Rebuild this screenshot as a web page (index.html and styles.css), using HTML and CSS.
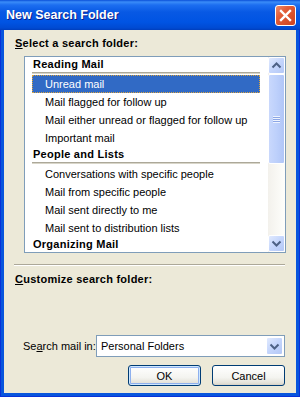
FILE: index.html
```html
<html>
	<head>
		<link rel="stylesheet" href="styles.css">
	</head>
	<body>
		<div class="window">
			<div class="titlebar">
				<span class="title">New Search Folder</span>
				<div class="close">
					<svg width="19" height="19" viewBox="0 0 19 19"><path d="M5 5 L14 14 M14 5 L5 14" stroke="#fff" stroke-width="2.4" stroke-linecap="square"/></svg>
				</div>
			</div>
			<div class="client">
				<div class="label"><u>S</u>elect a search folder:</div>

				<div class="listbox">
					<div class="items">
						<div class="group">Reading Mail</div>
						<div class="item selected">Unread mail</div>
						<div class="item">Mail flagged for follow up</div>
						<div class="item">Mail either unread or flagged for follow up</div>
						<div class="item">Important mail</div>
						<div class="group">People and Lists</div>
						<div class="item">Conversations with specific people</div>
						<div class="item">Mail from specific people</div>
						<div class="item">Mail sent directly to me</div>
						<div class="item">Mail sent to distribution lists</div>
						<div class="group">Organizing Mail</div>
					</div>
					<div class="scrollbar">
						<div class="sb-btn">
							<svg width="15" height="15" viewBox="0 0 15 15"><path d="M3.5 9.5 L7.5 5.5 L11.5 9.5" fill="none" stroke="#4d6185" stroke-width="2"/></svg>
						</div>
						<div class="sb-thumb"><span class="grip"></span></div>
						<div class="sb-track"></div>
						<div class="sb-btn">
							<svg width="15" height="15" viewBox="0 0 15 15"><path d="M3.5 5.5 L7.5 9.5 L11.5 5.5" fill="none" stroke="#4d6185" stroke-width="2"/></svg>
						</div>
					</div>
				</div>

				<div class="separator"></div>
				<div class="label"><u>C</u>ustomize search folder:</div>

				<div class="search-row">
					<span class="field-label">Se<u>a</u>rch mail in:</span>
					<div class="combo">
						<span class="combo-text">Personal Folders</span>
						<div class="combo-btn">
							<svg width="15" height="15" viewBox="0 0 15 15"><path d="M3.5 5.5 L7.5 9.5 L11.5 5.5" fill="none" stroke="#4d6185" stroke-width="2"/></svg>
						</div>
					</div>
				</div>

				<div class="buttons">
					<button class="default">OK</button>
					<button>Cancel</button>
				</div>
			</div>
		</div>
	</body>
</html>
```

FILE: styles.css
```css
* {
	box-sizing: border-box;
}
body {
	margin: 0;
	font-family: "Liberation Sans", Arial, sans-serif;
	font-size: 11px;
	color: #000;
	background: #ece9d8;
}

.window {
	width: 300px;
	height: 397px;
	display: flex;
	flex-direction: column;
	background: #0831d9;
	padding: 0 1px 1px 1px;
}

.titlebar {
	flex: none;
	height: 30px;
	display: flex;
	align-items: center;
	justify-content: space-between;
	padding: 0 4px 0 6px;
	margin: 0 -1px;
	background: linear-gradient(to bottom, #0a4fd8 0, #3a8cf8 2px, #1c6ef0 5px, #0859e4 12px, #0054e3 22px, #004ad2 28px, #003ebc 30px);
}
.title {
	color: #fff;
	font-weight: bold;
	font-size: 12.5px;
	text-shadow: 1px 1px #0a1f8c;
}
.close {
	width: 21px;
	height: 21px;
	border: 1px solid #fff;
	border-radius: 3px;
	background: linear-gradient(135deg, #ec8c6c 0, #e35d38 35%, #cc421f 100%);
}
.close svg {
	display: block;
}

.client {
	flex: 1;
	display: flex;
	flex-direction: column;
	background: #ece9d8;
	border: 3px solid #0855dd;
	border-top: 0;
	padding: 6px 10px 7px 10px;
}

.label {
	font-weight: bold;
	line-height: 14px;
	letter-spacing: .25px;
	margin-left: 1px;
}
u {
	text-decoration: underline;
	text-underline-offset: 1px;
}

.listbox {
	display: flex;
	height: 197px;
	margin: 6px 0 0 10px;
	border: 1px solid #7f9db9;
	background: #fff;
}
.items {
	flex: 1;
	overflow: hidden;
	padding: 0 8px 0 7px;
}
.group {
	font-weight: bold;
	line-height: 15px;
	letter-spacing: .25px;
	padding-left: 1px;
}
.item {
	line-height: 18px;
	height: 18px;
	padding-left: 13px;
	white-space: nowrap;
}
/* first item after a group heading carries the rule under the heading */
.group + .item {
	height: 21px;
	padding-top: 3px;
	background: linear-gradient(to bottom, #aca899 0, #aca899 1px, #d8d5c8 1px, #d8d5c8 2px, transparent 2px);
}
.group + .item.selected {
	background: linear-gradient(to bottom, #aca899 0, #aca899 1px, #d8d5c8 1px, #d8d5c8 2px, #fff 2px, #fff 3px, #316ac5 3px);
}
.item.selected {
	color: #fff;
	background: #316ac5;
}
.item.selected {
	outline: none;
	box-shadow: inset 0 -1px 0 #316ac5;
}
.group + .item.selected {
	position: relative;
}
.group + .item.selected::after {
	content: '';
	position: absolute;
	left: 0;
	right: 0;
	top: 3px;
	bottom: 0;
	border: 1px dotted #d9a441;
}

.scrollbar {
	flex: none;
	width: 17px;
	display: flex;
	flex-direction: column;
	background: linear-gradient(to right, #f3f1ec, #fefefb);
}
.sb-btn {
	height: 17px;
	flex: none;
	border: 1px solid #fff;
	border-radius: 2px;
	background: linear-gradient(135deg, #e1eafe 0, #c4d5fc 50%, #b4c8f6 100%);
}
.sb-btn svg {
	display: block;
}
.sb-thumb {
	height: 90px;
	flex: none;
	display: flex;
	align-items: center;
	justify-content: center;
	border: 1px solid #fff;
	border-radius: 2px;
	background: linear-gradient(to right, #c9d8fc 0, #bdd0fb 50%, #b1c6f7 100%);
}
.grip {
	width: 7px;
	height: 7px;
	background: repeating-linear-gradient(to bottom, #eef3fe 0, #eef3fe 1px, #8ca6e5 1px, #8ca6e5 2px);
}
.sb-track {
	flex: 1;
}

.separator {
	height: 2px;
	margin: 11px 1px 0 0;
	border-top: 1px solid #aca899;
	border-bottom: 1px solid #fff;
}
.separator + .label {
	margin-top: 6px;
}

.search-row {
	margin: auto 1px 0 9px;
	display: flex;
	align-items: center;
	height: 22px;
}
.field-label {
	width: 73px;
}
.combo {
	flex: 1;
	height: 22px;
	display: flex;
	align-items: center;
	justify-content: space-between;
	border: 1px solid #7f9db9;
	background: #fff;
	padding: 1px;
}
.combo-text {
	padding-left: 3px;
}
.combo-btn {
	width: 17px;
	height: 18px;
	border: 1px solid #fff;
	border-radius: 2px;
	background: linear-gradient(135deg, #e1eafe 0, #c4d5fc 50%, #b4c8f6 100%);
}
.combo-btn svg {
	display: block;
	margin: 1px 0 0 0;
}

.buttons {
	display: flex;
	justify-content: flex-end;
	gap: 11px;
	margin: 8px 1px 0 0;
}
button {
	width: 73px;
	height: 21px;
	font-family: "Liberation Sans", Arial, sans-serif;
	font-size: 11px;
	color: #000;
	border: 1px solid #003c74;
	border-radius: 3px;
	background: linear-gradient(to bottom, #fff 0, #f4f4f0 60%, #e3e1d8 90%, #d6d0c5 100%);
	padding: 0;
}
button.default {
	box-shadow: inset 0 0 0 1px #cee7ff, inset 0 0 0 2px #8eb0ee;
}
```
